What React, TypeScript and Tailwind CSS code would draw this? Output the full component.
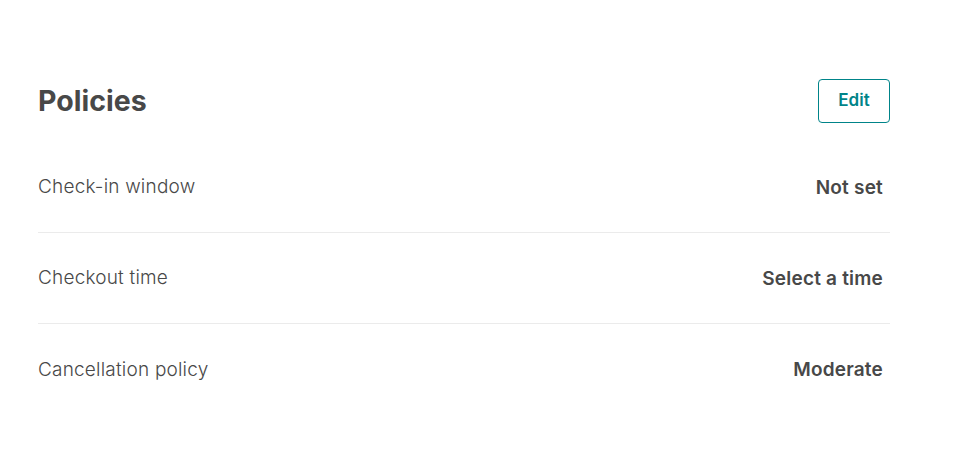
export default function App() {
  const rows = [
    { label: "Check-in window", value: "Not set" },
    { label: "Checkout time", value: "Select a time" },
    { label: "Cancellation policy", value: "Moderate" },
  ];
  return (
    <div
      className="w-[978px] h-[468px] bg-white text-[#484848]"
      style={{ fontFamily: "Inter, 'Liberation Sans', sans-serif" }}
    >
      <div className="ml-[38px] w-[852px] pt-[79px]">
        <div className="flex items-center justify-between h-[44px]">
          <h2 className="text-[28.5px] font-bold leading-none">Policies</h2>
          <button className="w-[72px] h-[44px] border border-[#008489] rounded-[4px] text-[#008489] text-[17px] font-semibold">
            Edit
          </button>
        </div>
        <div className="mt-[19px]">
          {rows.map((r, i) => (
            <div
              key={r.label}
              className={
                "flex items-center justify-between h-[91px] " +
                (i < rows.length - 1 ? "border-b border-[#ebebeb]" : "")
              }
            >
              <span className="text-[19px] font-light text-[#484848] tracking-[0.2px] pt-[1px]">{r.label}</span>
              <span className="text-[19px] font-semibold text-[#484848] mr-[7px] tracking-[0.2px] pt-[2px]">{r.value}</span>
            </div>
          ))}
        </div>
      </div>
    </div>
  );
}
